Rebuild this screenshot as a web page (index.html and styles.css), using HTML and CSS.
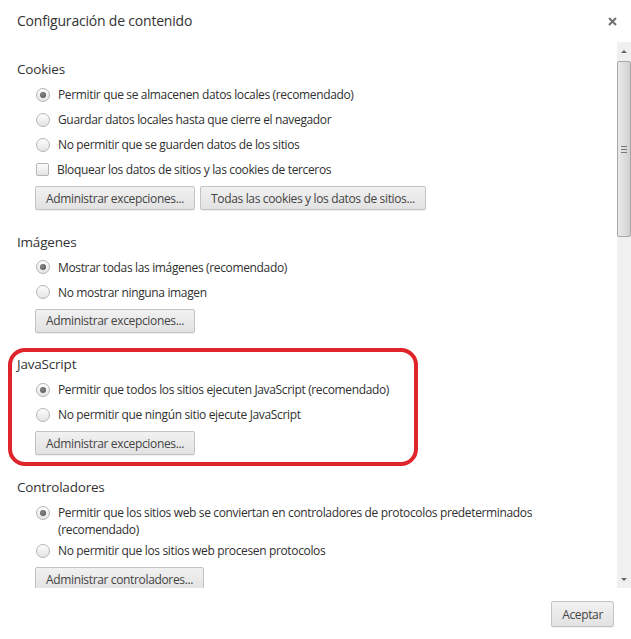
FILE: index.html
```html
<!DOCTYPE html>
<html lang="es">
<head>
<meta charset="utf-8">
<title>Configuración de contenido</title>
<link rel="stylesheet" href="styles.css">
</head>
<body>
<div class="dialog">
  <header class="header">
    <h1 class="title">Configuración de contenido</h1>
    <span class="close" aria-label="Cerrar">
      <svg width="9" height="9" viewBox="0 0 9 9"><path d="M1 1L8 8M8 1L1 8" stroke="#6f6f6f" stroke-width="2"/></svg>
    </span>
  </header>
  <div class="body">
    <div class="scroll">
      <section class="section">
        <h2 class="heading">Cookies</h2>
        <label class="row"><span class="radio checked"></span>Permitir que se almacenen datos locales (recomendado)</label>
        <label class="row"><span class="radio"></span>Guardar datos locales hasta que cierre el navegador</label>
        <label class="row"><span class="radio"></span>No permitir que se guarden datos de los sitios</label>
        <label class="row"><span class="check"></span>Bloquear los datos de sitios y las cookies de terceros</label>
        <div class="buttons">
          <button class="btn">Administrar excepciones...</button>
          <button class="btn">Todas las cookies y los datos de sitios...</button>
        </div>
      </section>
      <section class="section">
        <h2 class="heading">Imágenes</h2>
        <label class="row"><span class="radio checked"></span>Mostrar todas las imágenes (recomendado)</label>
        <label class="row"><span class="radio"></span>No mostrar ninguna imagen</label>
        <div class="buttons">
          <button class="btn">Administrar excepciones...</button>
        </div>
      </section>
      <section class="section highlighted">
        <h2 class="heading">JavaScript</h2>
        <label class="row"><span class="radio checked"></span>Permitir que todos los sitios ejecuten JavaScript (recomendado)</label>
        <label class="row"><span class="radio"></span>No permitir que ningún sitio ejecute JavaScript</label>
        <div class="buttons">
          <button class="btn">Administrar excepciones...</button>
        </div>
      </section>
      <section class="section">
        <h2 class="heading">Controladores</h2>
        <label class="row multi"><span class="radio checked"></span><span>Permitir que los sitios web se conviertan en controladores de protocolos predeterminados<br>(recomendado)</span></label>
        <label class="row"><span class="radio"></span>No permitir que los sitios web procesen protocolos</label>
        <div class="buttons">
          <button class="btn">Administrar controladores...</button>
        </div>
      </section>
    </div>
    <div class="scrollbar">
      <span class="arrow up"></span>
      <div class="track">
        <div class="thumb"><span class="grip"></span></div>
      </div>
      <span class="arrow down"></span>
    </div>
  </div>
  <footer class="footer">
    <button class="btn ok">Aceptar</button>
  </footer>
</div>
</body>
</html>
```
FILE: styles.css
```css
*, *::before, *::after { box-sizing: border-box; }
html, body { margin: 0; padding: 0; background: #fff; }
body {
  font-family: "Open Sans", "Noto Sans", sans-serif;
  font-size: 12px;
  color: #303030;
}
.dialog {
  width: 631px;
  height: 639px;
  display: flex;
  flex-direction: column;
  background: #fff;
  overflow: hidden;
}
.header {
  height: 42px;
  flex: none;
  display: flex;
  align-items: center;
  justify-content: space-between;
  padding: 0 14px 0 17px;
}
.title {
  margin: 0;
  font-size: 14px;
  font-weight: normal;
  color: #333;
  line-height: 20px;
  letter-spacing: -0.2px;
}
.close { display: flex; width: 9px; height: 9px; }
.body {
  height: 546px;
  flex: none;
  display: flex;
}
.scroll {
  flex: 1;
  overflow: hidden;
  padding: 17px 0 0 17px;
}
.section {
  margin-bottom: 21.7px;
  position: relative;
}
.highlighted::before {
  content: "";
  position: absolute;
  left: -9px;
  top: -6px;
  width: 410px;
  height: 118px;
  border: 4px solid #e0242c;
  border-radius: 17px;
  pointer-events: none;
}
.heading {
  margin: 0 0 3px;
  font-size: 13.5px;
  font-weight: normal;
  line-height: 20px;
  color: #333;
  letter-spacing: -0.2px;
}
.row {
  display: flex;
  align-items: center;
  height: 25px;
  padding-left: 19px;
  letter-spacing: -0.35px;
  white-space: nowrap;
}
.row.multi {
  height: 38px;
  align-items: flex-start;
  line-height: 17px;
  padding-top: 4px;
}
.row.multi .radio { margin-top: 2px; }
.radio {
  flex: none;
  width: 14px;
  height: 14px;
  border-radius: 50%;
  border: 1px solid #b5b5b5;
  background: linear-gradient(#fdfdfd, #e4e4e4);
  margin-right: 8px;
  position: relative;
}
.radio.checked::after {
  content: "";
  position: absolute;
  left: 3px;
  top: 3px;
  width: 6px;
  height: 6px;
  border-radius: 50%;
  background: radial-gradient(circle at 40% 40%, #8a8a8a, #4a4a4a);
}
.check {
  flex: none;
  width: 13px;
  height: 13px;
  border: 1px solid #b5b5b5;
  border-radius: 2px;
  background: linear-gradient(#fdfdfd, #e4e4e4);
  margin-right: 8px;
}
.buttons {
  display: flex;
  gap: 5px;
  margin-top: 4px;
  padding-left: 18px;
}
.btn {
  font-family: inherit;
  font-size: 12px;
  letter-spacing: -0.35px;
  color: #444;
  height: 24px;
  padding: 0 10px;
  border: 1px solid #c3c3c3;
  border-radius: 2px;
  background: linear-gradient(#f1f1f1, #e2e2e2);
  box-shadow: 0 1px 0 rgba(0,0,0,0.06);
}
.scrollbar {
  width: 14px;
  flex: none;
  background: #f0f0f0;
  display: flex;
  flex-direction: column;
}
.arrow {
  height: 18px;
  flex: none;
  display: flex;
  align-items: center;
  justify-content: center;
}
.arrow::before {
  content: "";
  border-left: 3px solid transparent;
  border-right: 3px solid transparent;
}
.arrow.up::before { border-bottom: 3px solid #666; }
.arrow.down::before { border-top: 3px solid #666; }
.track { flex: 1; }
.thumb {
  height: 176px;
  margin-top: 1px;
  border: 1px solid #a8a8a8;
  border-radius: 2px;
  background: linear-gradient(90deg, #e9e9e9, #dcdcdc 60%, #d0d0d0);
  display: flex;
  align-items: center;
  justify-content: center;
}
.grip {
  width: 6px;
  height: 7px;
  border-top: 1px solid #777;
  border-bottom: 1px solid #777;
  position: relative;
}
.grip::after {
  content: "";
  position: absolute;
  left: 0; right: 0; top: 2px;
  border-top: 1px solid #777;
}
.footer {
  flex: 1;
  display: flex;
  justify-content: flex-end;
  align-items: flex-start;
  padding: 13px 17px 0 0;
}
.btn.ok {
  height: 26px;
  padding: 0 10px;
}
```
